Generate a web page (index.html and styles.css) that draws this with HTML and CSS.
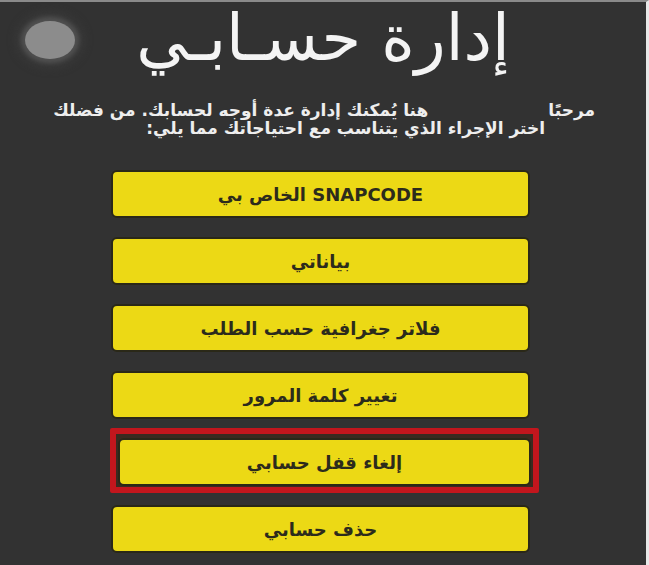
FILE: index.html
```html
<!DOCTYPE html>
<html lang="ar">
<head>
<meta charset="utf-8">
<link rel="stylesheet" href="styles.css">
</head>
<body>
<div class="screen">
  <header class="header">
    <div class="dot"></div>
    <h1 class="title" dir="rtl">إدارة حسـابـي</h1>
    <div class="spacer"></div>
  </header>
  <div class="intro" dir="rtl">
    <p class="line1"><span>مرحبًا</span><span>هنا يُمكنك إدارة عدة أوجه لحسابك. من فضلك</span></p>
    <p class="line2">اختر الإجراء الذي يتناسب مع احتياجاتك مما يلي:</p>
  </div>
  <div class="list">
    <div class="btn" dir="rtl">SNAPCODE الخاص بي</div>
    <div class="btn" dir="rtl">بياناتي</div>
    <div class="btn" dir="rtl">فلاتر جغرافية حسب الطلب</div>
    <div class="btn" dir="rtl">تغيير كلمة المرور</div>
    <div class="hl"><div class="btn inner" dir="rtl">إلغاء قفل حسابي</div></div>
    <div class="btn after" dir="rtl">حذف حسابي</div>
  </div>
</div>
</body>
</html>
```
FILE: styles.css
```css
html, body {
  margin: 0;
  padding: 0;
  background: #333333;
}
.screen {
  width: 649px;
  height: 565px;
  box-sizing: border-box;
  background: #323232;
  border-top: 2px solid #8a8a8a;
  border-right: 3px solid #e8e8e8;
  overflow: hidden;
  font-family: "DejaVu Sans", "Noto Sans", sans-serif;
}
.header {
  display: flex;
  align-items: flex-start;
  height: 99px;
}
.dot {
  width: 50px;
  height: 38px;
  margin: 19px 0 0 25px;
  border-radius: 50%;
  background: #8c8c8c;
  box-shadow: 0 0 4px 4px #505050, 0 0 10px 8px #3c3c3c;
  flex: none;
}
.title {
  flex: 1;
  margin: -2px 0 0 0;
  text-align: center;
  color: #f4f4f4;
  font-weight: normal;
  font-size: 64px;
  line-height: 76px;
}
.spacer {
  width: 50px;
  margin-right: 25px;
  flex: none;
}
.intro {
  color: #eeeeee;
  font-weight: bold;
  font-size: 17px;
  line-height: 18px;
}
.intro p {
  margin: 0;
}
.line1 {
  display: flex;
  gap: 120px;
  padding-right: 51px;
}
.line2 {
  padding-right: 101px;
}
.list {
  display: flex;
  flex-direction: column;
  align-items: flex-start;
  padding-left: 111px;
  margin-top: 33px;
}
.btn {
  width: 419px;
  height: 48px;
  box-sizing: border-box;
  background: #ecd915;
  border: 2px solid #2a2818;
  border-radius: 6px;
  display: flex;
  align-items: center;
  justify-content: center;
  color: #2c2b1c;
  font-weight: bold;
  font-size: 18px;
}
.btn + .btn {
  margin-top: 19px;
}
.hl {
  margin-top: 9px;
  margin-left: -1px;
  border: 6px solid #c2161d;
  padding: 4px 2px 1px 2px;
  background: #3a2a20;
  border-radius: 2px;
}
.btn.inner {
  width: 413px;
}
.btn.after {
  margin-top: 12px;
}
```
